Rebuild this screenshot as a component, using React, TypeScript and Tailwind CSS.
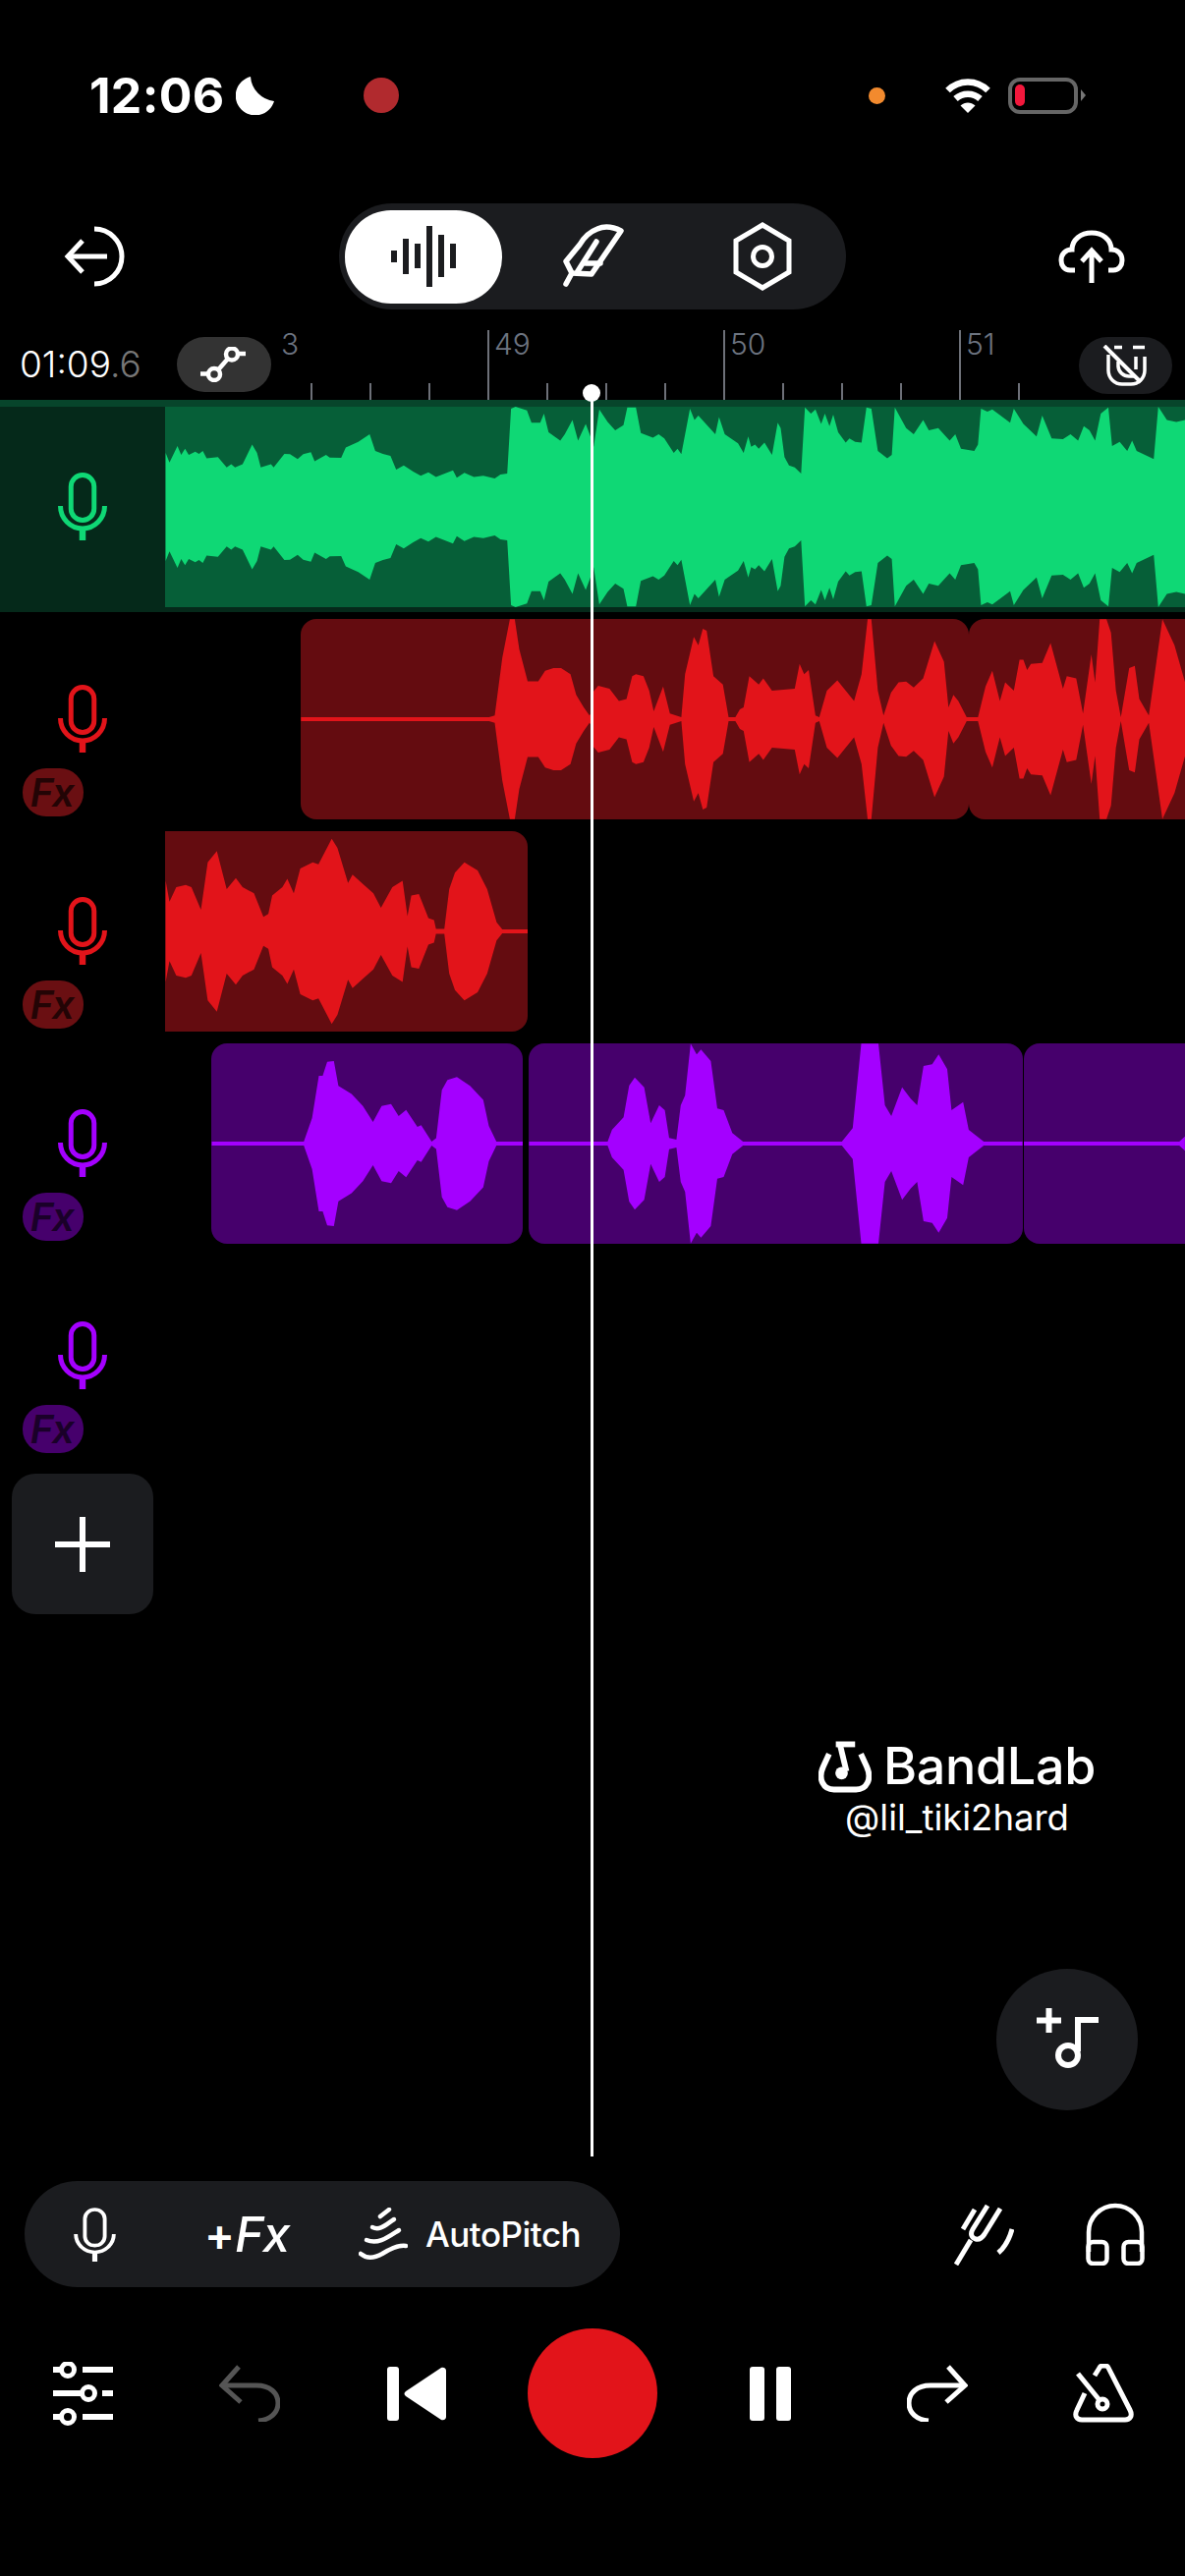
import React from "react";

type P = [number, number];
const env = (pts: number[], x0: number, sx: number, y0: number, sy: number, cy: number): P[] => {
  const out: P[] = [];
  for (let i = 0; i < pts.length; i += 2) {
    out.push([x0 + pts[i] / sx, Math.min(102, Math.max(2, cy - (y0 + pts[i + 1] / sy)))]);
  }
  return out;
};

const greenEnv = [
  ...env([437,145,447,168,468,128,478,150,488,135,498,150,515,142,525,147,535,140,545,158,575,155,598,180,610,172,620,180,640,172,665,125,678,145,688,180,715,172,722,180,750,147,765,148,785,160,800,148,820,143,830,165,860,150,870,156,900,157,912,132,945,118,975,100,990,140,1010,147,1030,152,1045,185,1065,175,1090,190,1110,200,1130,192,1150,203,1195,187,1205,205,1225,193,1250,203,1275,200,1305,207,1320,197,1338,195,1348,38,1360,33,1390,42,1402,72,1425,72,1435,50,1447,95,1478,115,1490,100,1510,65,1525,115,1545,75,1563,118], 0, 2.592, 400, 2.376, 516),
  ...env([3,130,18,40,40,70,60,90,82,78,92,35,115,35,128,97,160,108,175,100,190,110,215,145,225,135,235,148,258,38,270,65,280,55,325,100,335,58,350,100,385,122,400,145,412,105,420,130,430,125,440,135,455,120,475,150,490,72,498,85,508,155,520,175,535,180,552,195,562,35,578,50,590,40,605,75,615,50,627,80,637,52,650,95,670,120,680,110,695,118,712,120,725,35,738,38,755,140,780,158,792,150,800,35,830,85,850,100,875,65,890,90,915,85,945,115,960,100,975,135,1010,140,1020,125,1028,38,1045,45,1058,40,1105,72,1115,38,1140,75,1175,105,1190,55,1215,110,1245,112,1265,100,1285,115,1300,80,1315,90,1330,115,1345,50,1365,35,1375,128,1395,118,1415,140,1428,115,1440,140,1485,160,1497,33,1520,65,1545,70,1568,65], 603, 2.6, 400, 2.376, 516),
];

const red1Env = [
  ...env([794,786,1290,786,1305,780,1325,640,1345,547,1358,547,1370,620,1392,697,1420,697,1438,672,1460,665,1480,665,1505,680,1520,730,1540,760,1555,780,1563,770], 0, 2.592, 400, 2.376, 732),
  ...env([0,725,15,708,45,715,70,745,90,740,105,685,115,680,135,685,150,720,162,770,187,710,205,775,235,790,245,680,268,590,280,610,292,570,302,575,320,685,345,705,360,785,378,785,390,765,400,760,415,685,440,705,452,690,475,720,535,715,548,655,560,680,572,670,590,780,600,785,620,720,648,695,692,745,712,680,728,547,738,547,755,720,770,780,790,725,810,700,830,698,850,712,875,690,905,600,930,650,942,760,955,730,968,745,990,785,1020,785,1040,710,1058,672,1078,745,1092,700,1115,720,1130,645,1140,645,1150,670,1160,655,1190,653,1212,605,1245,715,1255,685,1280,690,1298,775,1320,632,1330,700,1342,547,1360,547,1372,580,1385,720,1398,785,1420,665,1435,660,1447,740,1472,780,1508,547,1540,610,1568,700], 603, 2.6, 400, 2.376, 732),
];
const red1A: P[] = [...red1Env.filter(([x]) => x <= 986), [986, 2]];
const red1B: P[] = [[986, 2], ...red1Env.filter(([x]) => x > 986)];

const red2Env = env([437,1180,447,1230,465,1195,490,1190,505,1195,530,1250,548,1135,572,1108,598,1200,622,1173,640,1195,670,1210,695,1267,708,1260,718,1215,745,1195,758,1175,775,1210,792,1150,825,1135,840,1140,875,1078,890,1100,918,1185,930,1165,960,1190,985,1210,1005,1245,1035,1195,1062,1180,1075,1265,1085,1215,1105,1212,1130,1270,1145,1275,1150,1296,1172,1296,1185,1200,1200,1160,1225,1135,1260,1155,1285,1200,1310,1280,1325,1300,1392,1300], 0, 2.592, 400, 2.376, 948);

const purple1Env = env([563,300,808,300,830,240,848,135,858,135,870,100,888,98,900,160,935,180,965,210,992,250,1015,210,1040,205,1060,235,1080,220,1110,262,1120,258,1148,300,1160,290,1175,170,1190,145,1215,138,1250,160,1285,195,1300,260,1320,300,1390,300], 0, 2.613, 1040, 2.45, 1164);

const purple2Env = env([42,338,225,338,235,300,262,262,275,165,288,140,310,170,325,280,345,225,358,240,368,325,385,330,395,225,405,195,418,37,432,70,442,55,465,90,480,235,495,240,515,310,540,338,770,338,795,295,815,37,855,37,870,225,885,258,910,170,930,205,945,225,960,105,980,100,995,70,1015,115,1025,240,1052,215,1065,300,1100,338,1190,338], 520, 2.286, 1050, 3, 1164);

const purple3Env = env([1192,338,1555,338,1568,320], 520, 2.286, 1050, 3, 1164);

const Wave = ({ left, width, data, fill }: { left: number; width: number; data: P[]; fill: string }) => {
  const top = data.map(([x, h]) => `${(x - left).toFixed(1)},${(102 - h).toFixed(1)}`);
  const bottom = [...data].reverse().map(([x, h]) => `${(x - left).toFixed(1)},${(102 + h).toFixed(1)}`);
  return (
    <svg width={width} height={204} viewBox={`0 0 ${width} 204`} className="block">
      <polygon points={[...top, ...bottom].join(" ")} fill={fill} />
    </svg>
  );
};

const Mic = ({ color, w = 50, h = 69, sw = 5 }: { color: string; w?: number; h?: number; sw?: number }) => (
  <svg width={w} height={h} viewBox="0 0 50 69" preserveAspectRatio="none" fill="none" stroke={color} strokeWidth={sw}>
    <rect x="13.25" y="2.5" width="23.5" height="46" rx="11.75" />
    <path d="M2.5 34a22.5 23 0 0 0 45 0" />
    <path d="M25 58v11" strokeWidth={sw + 1.5} />
  </svg>
);

const Fx = ({ bg, color }: { bg: string; color: string }) => (
  <div className={`ml-[23px] mt-[16px] w-[62px] h-[49px] rounded-[24px] flex items-center justify-center ${bg}`}>
    <span className={`italic font-semibold text-[40px] leading-none tracking-[-1.5px] pr-[3px] ${color}`}>Fx</span>
  </div>
);

const TrackHead = ({ color, bg, fxColor }: { color: string; bg: string; fxColor: string }) => (
  <div className="w-[168px] shrink-0 flex flex-col">
    <div className="ml-[59px] mt-[67px] h-[69px]">
      <Mic color={color} />
    </div>
    <Fx bg={bg} color={fxColor} />
  </div>
);

const ticks = [317, 377, 437, 557, 617, 677, 797, 857, 917, 1037];
const bars = [497, 737, 977];

export default function App() {
  return (
    <div className="relative w-[1206px] h-[2622px] bg-black overflow-hidden flex flex-col font-[Inter,sans-serif] text-white">
      {/* status bar */}
      <div className="h-[207px] pt-[78px] shrink-0">
        <div className="flex items-center h-[38px]">
          <div className="ml-[91px] w-[149px] text-[50px] leading-[38px] font-bold tracking-[0.3px]">12:06</div>
          <svg width="40" height="39" viewBox="0 0 40 39" fill="white">
            <path d="M15 0A20 20 0 1 0 39 25A27 27 0 0 1 15 0Z" />
          </svg>
          <div className="ml-[90px] w-[36px] h-[36px] rounded-full bg-[#b12a2e]" />
          <div className="ml-[478px] w-[17px] h-[17px] rounded-full bg-[#f28a2e]" />
          <svg className="ml-[61px]" width="46" height="36" viewBox="0 0 46 36" fill="none" stroke="white" strokeWidth="6.500">
            <path d="M2.500 13C14 1.500 32 1.500 43.500 13" />
            <path d="M10.500 21.500C17.500 15 28.500 15 35.500 21.500" />
            <path d="M15.500 28.500C20 24.500 26 24.500 30.500 28.500L23 36Z" fill="white" stroke="none" />
          </svg>
          <div className="ml-[18px] w-[71px] h-[37px] rounded-[12px] border-[4px] border-[#666] flex items-center pl-[3px]">
            <div className="w-[10px] h-[22px] rounded-[5px] bg-[#f2183c]" />
          </div>
          <svg className="ml-[3px]" width="5" height="12" viewBox="0 0 5 12" fill="#777">
            <path d="M0 0L5 6L0 12Z" />
          </svg>
        </div>
      </div>

      {/* toolbar */}
      <div className="h-[108px] flex items-center shrink-0">
        <svg className="ml-[65px]" width="62" height="62" viewBox="0 0 62 62" fill="none" stroke="white" strokeWidth="5">
          <path d="M31 3A28 28 0 0 1 31 59" />
          <path d="M19 15L4 31L19 47" />
          <path d="M4 31H44" />
        </svg>
        <div className="ml-[218px] w-[516px] h-[108px] rounded-[54px] bg-[#1b1c1f] flex items-center">
          <div className="ml-[6px] w-[160px] h-[95px] rounded-[47px] bg-white flex items-center justify-center">
            <svg width="66" height="62" viewBox="0 0 66 62" fill="#1b1c1f">
              <rect x="0" y="25" width="6" height="12" />
              <rect x="12" y="13" width="6" height="36" />
              <rect x="24" y="18" width="6" height="25" />
              <rect x="36" y="0" width="6" height="62" />
              <rect x="48" y="9" width="6" height="43" />
              <rect x="60" y="18" width="6" height="25" />
            </svg>
          </div>
          <svg className="ml-[59px]" width="70" height="66" viewBox="0 0 70 66" fill="none" stroke="white" strokeWidth="5.500" strokeLinejoin="round" strokeLinecap="round">
            <path d="M62 7C54 3 45 2 38 5C30 8 24 14 20 21L6 38L12 50L32 51L62 7Z" />
            <path d="M12 50L6 61" />
            <path d="M37 18L18 48" />
            <path d="M26 40L41 40" />
          </svg>
          <svg className="ml-[106px]" width="60" height="70" viewBox="0 0 60 70" fill="none" stroke="white" strokeWidth="5">
            <path d="M30 3L57 19V51L30 67L3 51V19Z" />
            <circle cx="30" cy="35" r="9.500" />
          </svg>
        </div>
        <svg className="ml-[216px]" width="68" height="54" viewBox="0 0 68 54" fill="none" stroke="white" strokeWidth="5">
          <path d="M17 41H12C6 41 3 36 3 31C3 25 7 20 14 20C14 10 23 3 34 3C45 3 54 10 54 20C61 20 65 25 65 31C65 36 62 41 56 41H51" />
          <path d="M34 54V22M24 32L34 21L44 32" />
        </svg>
      </div>

      {/* ruler */}
      <div className="relative h-[92px] shrink-0 flex items-start">
        <svg className="absolute left-0 top-0" width="1206" height="92" viewBox="0 0 1206 92" stroke="#6d7078" strokeWidth="2">
          {bars.map((x) => (
            <line key={x} x1={x} x2={x} y1="21" y2="92" />
          ))}
          {ticks.map((x) => (
            <line key={x} x1={x} x2={x} y1="75" y2="92" />
          ))}
        </svg>
        <span className="absolute left-[286px] top-[21px] text-[30px] leading-[28px] font-light text-[#6d7480]">3</span>
        <span className="absolute left-[503px] top-[21px] text-[30px] leading-[28px] font-light text-[#6d7480]">49</span>
        <span className="absolute left-[743px] top-[21px] text-[30px] leading-[28px] font-light text-[#6d7480]">50</span>
        <span className="absolute left-[983px] top-[21px] text-[30px] leading-[28px] font-light text-[#6d7480]">51</span>
        <div className="ml-[20px] mt-[38px] w-[160px] h-[35px] text-[37px] leading-[35px] font-light">
          01:09<span className="text-[#777]">.6</span>
        </div>
        <div className="relative mt-[28px] w-[96px] h-[56px] rounded-[28px] bg-[#333333] flex items-center justify-center">
          <svg width="48" height="36" viewBox="0 0 48 36" fill="none" stroke="white" strokeWidth="4.500">
            <circle cx="14" cy="28" r="6" />
            <circle cx="32" cy="7.500" r="6" />
            <path d="M18 23.500L28 12" />
            <path d="M0 27.500H8M38 7H46" />
          </svg>
        </div>
        <div className="relative ml-auto mr-[13px] mt-[28px] w-[95px] h-[58px] rounded-[29px] bg-[#1b1c1f] flex items-center justify-center">
          <svg width="48" height="43" viewBox="0 0 48 43" fill="none" stroke="white" strokeWidth="3.500">
            <path d="M6 10V26A14 14 0 0 0 20 40H29A14 14 0 0 0 43 26V12" />
            <path d="M34 12V25" />
            <path d="M16 17V22A11 11 0 0 0 27 32H34" />
            <path d="M31 2.500H43M12 2.500H20" />
            <path d="M2 1L39 38" strokeWidth="4" />
          </svg>
        </div>
      </div>

      {/* green track */}
      <div className="h-[216px] shrink-0 flex bg-[#05291a] border-t-[7px] border-[#07452b]">
        <div className="w-[168px] shrink-0 flex items-center justify-center pb-[7px]">
          <Mic color="#0fd875" />
        </div>
        <div className="h-[204px] flex-1 bg-[#065f38] overflow-hidden">
          <Wave left={168} width={1038} data={greenEnv} fill="#0fd875" />
        </div>
      </div>

      {/* red track 1 */}
      <div className="mt-[7px] h-[204px] shrink-0 flex">
        <TrackHead color="#e2141a" bg="bg-[#6a0f12]" fxColor="text-[#230405]" />
        <div className="ml-[138px] w-[680px] h-[204px] rounded-[16px] bg-[#640c10] overflow-hidden shrink-0">
          <Wave left={306} width={680} data={red1A} fill="#e2141a" />
        </div>
        <div className="w-[220px] h-[204px] rounded-l-[16px] bg-[#640c10] overflow-hidden shrink-0">
          <Wave left={986} width={220} data={red1B} fill="#e2141a" />
        </div>
      </div>

      {/* red track 2 */}
      <div className="mt-[12px] h-[204px] shrink-0 flex">
        <TrackHead color="#e2141a" bg="bg-[#6a0f12]" fxColor="text-[#230405]" />
        <div className="w-[369px] h-[204px] rounded-r-[16px] bg-[#640c10] overflow-hidden shrink-0">
          <Wave left={168} width={369} data={red2Env} fill="#e2141a" />
        </div>
      </div>

      {/* purple track 1 */}
      <div className="mt-[12px] h-[204px] shrink-0 flex">
        <TrackHead color="#a400ff" bg="bg-[#46006c]" fxColor="text-[#1a0029]" />
        <div className="ml-[47px] w-[317px] h-[204px] rounded-[16px] bg-[#46006c] overflow-hidden shrink-0">
          <Wave left={215} width={317} data={purple1Env} fill="#a400ff" />
        </div>
        <div className="ml-[6px] w-[503px] h-[204px] rounded-[16px] bg-[#46006c] overflow-hidden shrink-0">
          <Wave left={538} width={503} data={purple2Env} fill="#a400ff" />
        </div>
        <div className="ml-[1px] w-[164px] h-[204px] rounded-l-[16px] bg-[#46006c] overflow-hidden shrink-0">
          <Wave left={1042} width={164} data={purple3Env} fill="#a400ff" />
        </div>
      </div>

      {/* purple track 2 */}
      <div className="mt-[12px] h-[204px] shrink-0 flex">
        <TrackHead color="#a400ff" bg="bg-[#46006c]" fxColor="text-[#1a0029]" />
      </div>

      {/* add track */}
      <div className="mt-[18px] ml-[12px] w-[144px] h-[143px] rounded-[24px] bg-[#1b1c1f] flex items-center justify-center shrink-0">
        <svg width="56" height="56" viewBox="0 0 56 56" stroke="white" strokeWidth="6">
          <path d="M28 0V56M0 28H56" />
        </svg>
      </div>

      {/* watermark */}
      <div className="mt-[128px] ml-[833px] w-[282px] flex flex-col items-center shrink-0">
        <div className="flex items-center h-[54px] w-full">
          <svg width="55" height="54" viewBox="0 0 55 54" fill="none" stroke="white" strokeWidth="6">
            <path d="M11 14L5 27C-1 40 5 51 16 51H39C50 51 56 40 50 27L44 14" />
            <path d="M18 4H38" />
            <path d="M22 3L29 32" />
            <circle cx="24" cy="34" r="6.500" fill="white" stroke="none" />
          </svg>
          <span className="ml-[12px] text-[52px] leading-[54px] font-medium tracking-[-0.3px]">BandLab</span>
        </div>
        <div className="mt-[5px] text-[36.500px] leading-[40px] font-normal whitespace-nowrap">@lil_tiki2hard</div>
      </div>

      {/* add sample */}
      <div className="mt-[134px] ml-[1014px] w-[144px] h-[144px] rounded-full bg-[#1b1c1f] flex items-center justify-center shrink-0">
        <svg width="64" height="64" viewBox="0 0 64 64" fill="none" stroke="white" strokeWidth="6">
          <path d="M13.500 0V25M1 12.500H26" />
          <path d="M44 64M43 44V12H64" />
          <circle cx="33" cy="48" r="10" />
        </svg>
      </div>

      {/* action row */}
      <div className="mt-[72px] h-[108px] flex items-center shrink-0">
        <div className="ml-[25px] w-[606px] h-[108px] rounded-[54px] bg-[#1b1c1f] flex items-center shrink-0">
          <div className="ml-[50px] w-[43px]">
            <Mic color="white" w={43} h={55} sw={4.5} />
          </div>
          <div className="ml-[90px] w-[86px] flex items-center whitespace-nowrap">
            <span className="text-[46px] leading-[50px] font-semibold">+</span>
            <span className="text-[50px] leading-[50px] italic font-medium tracking-[-1px]">Fx</span>
          </div>
          <svg className="ml-[71px]" width="50" height="55" viewBox="0 0 50 55" fill="none" stroke="white" strokeWidth="4.500" strokeLinecap="round">
            <path d="M22 9L31 2" />
            <path d="M14 20C22 24 28 17 36 12" />
            <path d="M8 33C20 38 30 30 41 23" />
            <path d="M2 47C8 52 15 52 24 47C32 42 40 38 48 39" />
          </svg>
          <span className="ml-[18px] text-[35px] leading-none font-medium tracking-[-0.5px]">AutoPitch</span>
        </div>
        <svg className="ml-[340px]" width="61" height="63" viewBox="0 0 61 63" fill="none" stroke="white" strokeWidth="5">
          <path d="M2 62L17 37" />
          <path d="M34 2L19 26C16 31 18 35 22 36C26 37 29 34 31 31L47 5" />
          <path d="M9 26L21 6" />
          <path d="M45 50C51 45 56 37 59 26" />
        </svg>
        <svg className="ml-[73px]" width="60" height="64" viewBox="0 0 60 64" fill="none" stroke="white" strokeWidth="4.500">
          <path d="M3 50V30A27 27 0 0 1 57 30V50" />
          <rect x="2.500" y="40" width="19" height="22" rx="5" />
          <rect x="38.500" y="40" width="19" height="22" rx="5" />
        </svg>
      </div>

      {/* transport */}
      <div className="mt-[42px] h-[132px] flex items-center shrink-0">
        <svg className="ml-[54px]" width="61" height="65" viewBox="0 0 61 65" fill="none" stroke="white" strokeWidth="6">
          <path d="M0 8H8M30 8H61M0 32H28M50 32H61M0 56H8M30 56H61" />
          <circle cx="15" cy="8" r="6.500" strokeWidth="5" />
          <circle cx="36" cy="32" r="6.500" strokeWidth="5" />
          <circle cx="15" cy="56" r="6.500" strokeWidth="5" />
        </svg>
        <svg className="ml-[108px]" width="62" height="58" viewBox="0 0 62 58" fill="none" stroke="#555555" strokeWidth="5">
          <path d="M20 2L3 21L22 38" />
          <path d="M3 21H38C52 21 60 29 60 39C60 49 52 56 40 57" />
        </svg>
        <svg className="ml-[109px]" width="60" height="55" viewBox="0 0 60 55" fill="white">
          <rect x="0" y="0" width="12" height="55" rx="3" />
          <path d="M55 1C58 0 60 2 60 4V51C60 53 58 55 55 54L19 30C17 28.500 17 26.500 19 25Z" />
        </svg>
        <div className="ml-[83px] w-[132px] h-[132px] rounded-full bg-[#e2141a] shrink-0" />
        <svg className="ml-[94px]" width="42" height="55" viewBox="0 0 42 55" fill="white">
          <rect x="0" y="0" width="15" height="55" rx="3" />
          <rect x="27" y="0" width="15" height="55" rx="3" />
        </svg>
        <svg className="ml-[118px] -scale-x-100" width="62" height="58" viewBox="0 0 62 58" fill="none" stroke="white" strokeWidth="5">
          <path d="M20 2L3 21L22 38" />
          <path d="M3 21H38C52 21 60 29 60 39C60 49 52 56 40 57" />
        </svg>
        <svg className="ml-[107px]" width="62" height="60" viewBox="0 0 62 60" fill="none" stroke="white" strokeWidth="5">
          <path d="M22 12L27 4Q28 2 30 2H33Q35 2 36 4L58 47C61 53 58 57 53 57H9C4 57 1 53 4 47L12 30" strokeLinejoin="round" />
          <path d="M5 10L27 37" />
          <circle cx="30" cy="41" r="5" />
        </svg>
      </div>

      {/* playhead */}
      <div className="absolute left-[601px] top-[392px] w-[2.500px] h-[1803px] bg-white" />
      <div className="absolute left-[593px] top-[391px] w-[18px] h-[18px] rounded-full bg-white" />
    </div>
  );
}
